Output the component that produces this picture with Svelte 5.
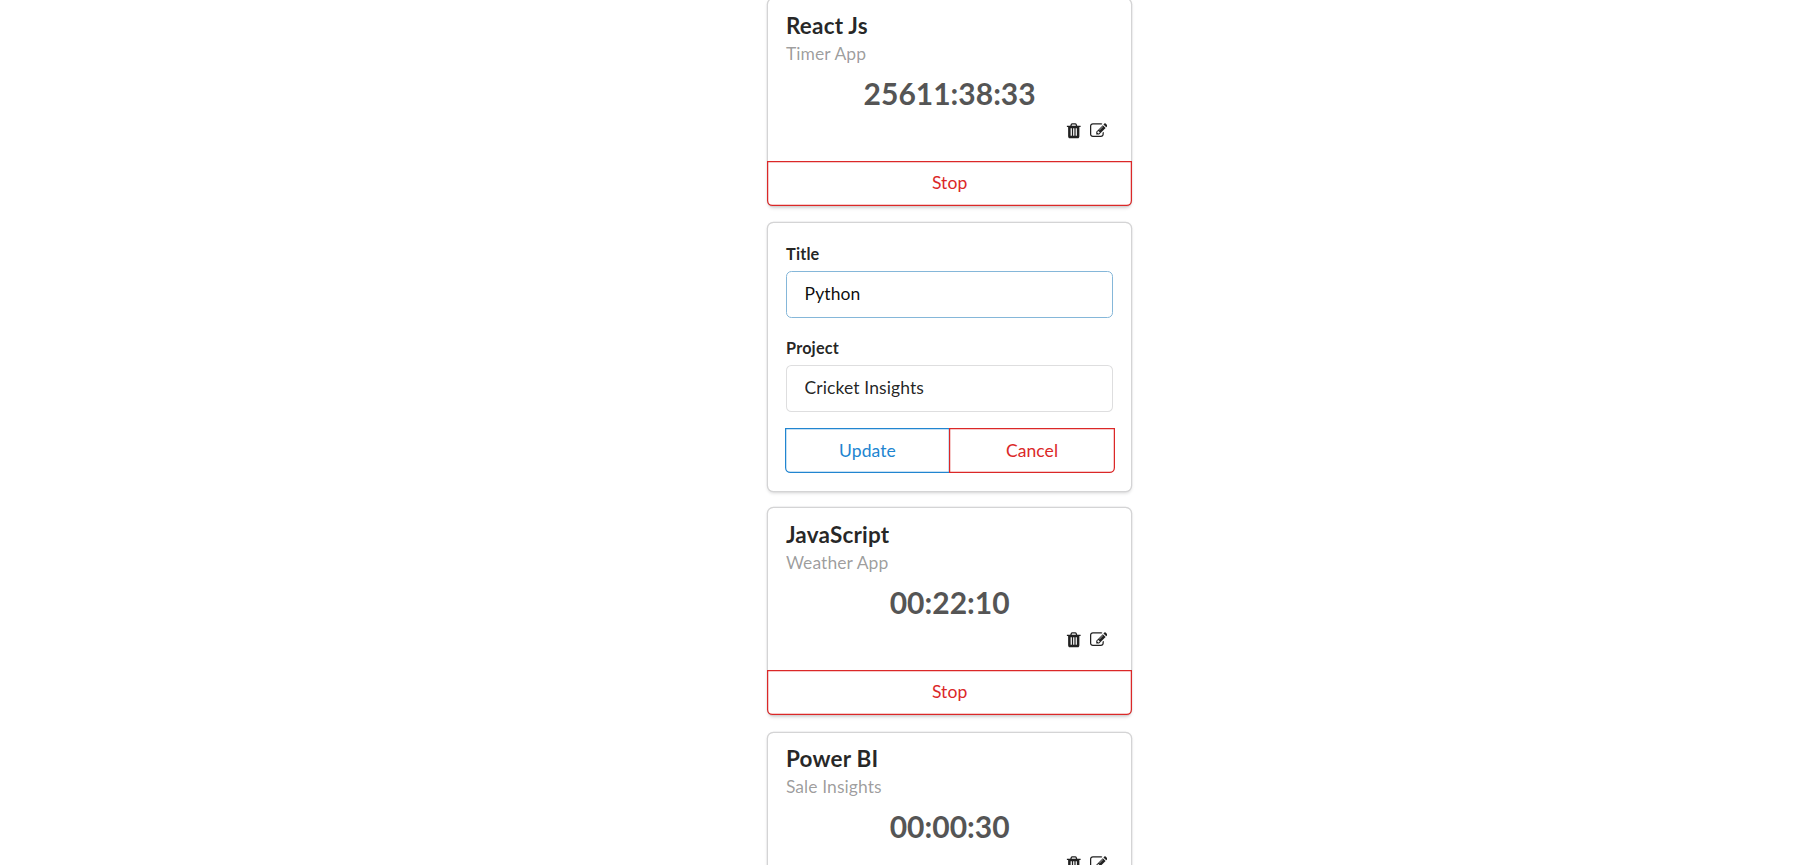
<script>
  const first = { title: 'React Js', project: 'Timer App', time: '25611:38:33' };
  const rest = [
    { title: 'JavaScript', project: 'Weather App', time: '00:22:10' },
    { title: 'Power BI', project: 'Sale Insights', time: '00:00:30' }
  ];
  let title = $state('Python');
  let project = $state('Cricket Insights');
</script>

{#snippet timer(t)}
  <article class="card">
    <div class="content">
      <h3 class="header">{t.title}</h3>
      <div class="meta">{t.project}</div>
      <h2 class="time">{t.time}</h2>
      <div class="actions">
        <svg viewBox="0 0 1792 1792" class="icon" aria-label="Delete"><path d="M704 1376v-704q0-14-9-23t-23-9h-64q-14 0-23 9t-9 23v704q0 14 9 23t23 9h64q14 0 23-9t9-23zm256 0v-704q0-14-9-23t-23-9h-64q-14 0-23 9t-9 23v704q0 14 9 23t23 9h64q14 0 23-9t9-23zm256 0v-704q0-14-9-23t-23-9h-64q-14 0-23 9t-9 23v704q0 14 9 23t23 9h64q14 0 23-9t9-23zm-544-992h448l-48-117q-7-9-17-11h-317q-10 2-17 11zm928 32v64q0 14-9 23t-23 9h-96v948q0 83-47 143.5t-113 60.5h-832q-66 0-113-58.5t-47-141.5v-952h-96q-14 0-23-9t-9-23v-64q0-14 9-23t23-9h309l70-167q15-37 54-63t79-26h320q40 0 79 26t54 63l70 167h309q14 0 23 9t9 23z" /></svg>
        <svg viewBox="0 0 1792 1792" class="icon" aria-label="Edit"><path d="M888 1184l116-116-152-152-116 116v56h96v96h56zm440-720q-16-16-33 1l-350 350q-17 17-1 33t33-1l350-350q17-17 1-33zm80 594v190q0 119-84.5 203.5t-203.5 84.5h-832q-119 0-203.5-84.5t-84.5-203.5v-832q0-119 84.5-203.5t203.5-84.5h832q63 0 117 25 15 7 18 23 3 17-9 29l-49 49q-14 14-32 8-23-6-45-6h-832q-66 0-113 47t-47 113v832q0 66 47 113t113 47h832q66 0 113-47t47-113v-126q0-13 9-22l64-64q15-15 35-7t20 29zm-96-738l288 288-672 672h-288v-288zm444 132l-92 92-288-288 92-92q28-28 68-28t68 28l152 152q28 28 28 68t-28 68z" /></svg>
      </div>
    </div>
    <button class="button red stop">Stop</button>
  </article>
{/snippet}

<main>
  {@render timer(first)}
  <form class="card edit" onsubmit={(e) => e.preventDefault()}>
    <label for="title">Title</label>
    <input id="title" class="focused" bind:value={title} />
    <label for="project">Project</label>
    <input id="project" bind:value={project} />
    <div class="buttons">
      <button class="button blue">Update</button>
      <button class="button red">Cancel</button>
    </div>
  </form>
  {#each rest as t}
    {@render timer(t)}
  {/each}
</main>

<style>
  :global(body) {
    background: #fff;
    overflow: hidden;
  }
  main {
    height: 865px;
    overflow: hidden;
    box-sizing: border-box;
    padding-left: 768.4px;
    display: flex;
    flex-direction: column;
    gap: 17.5px;
    font: 17.5px/25px Lato, sans-serif;
    letter-spacing: 0.08px;
    color: rgba(0, 0, 0, 0.87);
  }
  .card {
    flex: none;
    width: 362.5px;
    height: 207px;
    box-sizing: border-box;
    display: flex;
    flex-direction: column;
    border-radius: 5.36px;
    box-shadow: 0 1.25px 3.75px 0 #d4d4d5, 0 0 0 1.25px #d4d4d5;
  }
  .card:first-child {
    margin-top: -1.2px;
  }
  .content {
    height: 162px;
    box-sizing: border-box;
    padding: 17.5px;
  }
  .card:first-child .content {
    padding-top: 17.9px;
  }
  .header {
    margin: -5px 0 0;
    font-size: 22.5px;
    line-height: 28.9px;
    font-weight: 700;
    letter-spacing: 0.2px;
    color: rgba(0, 0, 0, 0.85);
  }
  .meta {
    color: rgba(0, 0, 0, 0.4);
  }
  .time {
    margin: 8.2px 0 0;
    text-align: center;
    font-size: 30px;
    line-height: 38px;
    font-weight: 700;
    letter-spacing: 0;
    color: #555;
  }
  .actions {
    display: flex;
    justify-content: flex-end;
    gap: 7px;
    padding: 9.8px 6.2px 0 0;
  }
  .icon {
    width: 17.5px;
    height: 17.5px;
    fill: rgba(0, 0, 0, 0.87);
  }
  .button {
    height: 45px;
    padding: 0;
    border: 0;
    background: transparent;
    font: 400 17.5px/17.5px Lato, sans-serif;
    letter-spacing: 0.08px;
  }
  .red {
    color: #db2828;
    box-shadow: 0 0 0 1.25px #db2828 inset;
  }
  .blue {
    color: #2185d0;
    box-shadow: 0 0 0 1.25px #2185d0 inset;
  }
  .stop {
    margin: 0 -1.25px;
    padding-bottom: 1.6px;
    border-radius: 0 0 5.36px 5.36px;
  }
  .edit {
    height: 267.5px;
    padding: 20.4px 17.7px 0;
  }
  label {
    font-size: 16.25px;
    font-weight: 700;
    line-height: 20px;
    letter-spacing: 0.15px;
    margin-bottom: 7px;
  }
  input {
    width: 100%;
    height: 47px;
    box-sizing: border-box;
    margin: 0 0 20.2px;
    padding: 0 17.5px 1px;
    border: 1.25px solid rgba(34, 36, 38, 0.15);
    border-radius: 5.36px;
    outline: 0;
    font: 17.5px/21.25px Lato, sans-serif;
    letter-spacing: 0.1px;
    color: rgba(0, 0, 0, 0.87);
  }
  input.focused {
    border-color: #85b7d9;
    color: rgba(0, 0, 0, 0.95);
  }
  .buttons {
    display: flex;
    margin: -4.1px -1.6px 0 -1.4px;
  }
  .buttons .button {
    flex: 1;
  }
  .buttons .blue {
    border-radius: 0 0 0 5.36px;
    margin-right: -1px;
  }
  .buttons .red {
    border-radius: 0 0 5.36px 0;
  }
</style>
